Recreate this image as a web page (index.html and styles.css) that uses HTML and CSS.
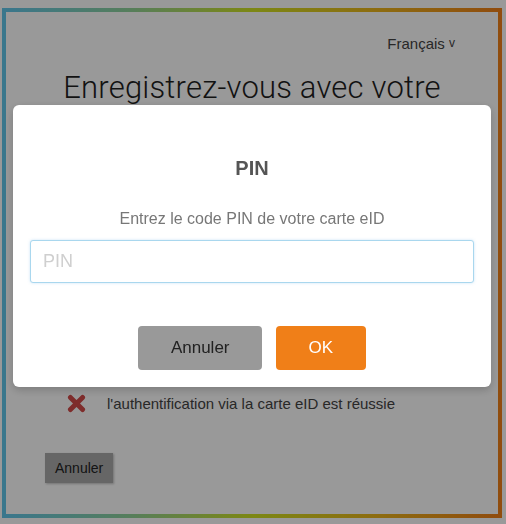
FILE: index.html
```html
<!DOCTYPE html>
<html lang="fr">
<head>
<meta charset="utf-8">
<title>Enregistrez-vous</title>
<link rel="stylesheet" href="styles.css">
</head>
<body>
<div class="page">
  <div class="frame">
    <div class="lang">Français <span class="caret">v</span></div>
    <h1 class="title">Enregistrez-vous avec votre carte eID</h1>
    <ul class="steps">
      <li class="step">
        <svg class="x-icon" viewBox="0 0 20 20" aria-hidden="true"><path d="M3.6 3.6 L16.4 16.4 M16.4 3.6 L3.6 16.4"/></svg>
        <span class="step-text">l'authentification via la carte eID est réussie</span>
      </li>
    </ul>
    <div class="actions"><button class="btn-cancel" type="button">Annuler</button></div>
  </div>
</div>
<div class="overlay">
  <div class="modal">
    <h2 class="modal-title">PIN</h2>
    <p class="modal-text">Entrez le code PIN de votre carte eID</p>
    <input class="pin-input" type="password" placeholder="PIN">
    <div class="modal-actions">
      <button class="btn btn-grey" type="button">Annuler</button>
      <button class="btn btn-orange" type="button">OK</button>
    </div>
  </div>
</div>
</body>
</html>
```

FILE: styles.css
```css
* { box-sizing: border-box; }

html, body {
  margin: 0;
  background: #ffffff;
  font-family: "Liberation Sans", Arial, sans-serif;
}

.page {
  padding: 8px 4px 6px 2px;
}

.frame {
  height: 510px;
  border: 4px solid #5fc3e4;
  border-image: linear-gradient(90deg, #62c6ea 0%, #8fd29a 25%, #cfe223 50%, #ebb51c 75%, #f08018 100%) 1;
  padding: 23px 43px 0 0;
  display: flex;
  flex-direction: column;
}

.lang {
  align-self: flex-end;
  font-size: 15px;
  line-height: 17px;
  color: #444;
}

.caret {
  font-size: 12px;
  vertical-align: 2px;
}

.title {
  margin: 18px 0 0 43px;
  font-family: Roboto, "Liberation Sans", sans-serif;
  font-weight: 300;
  font-size: 31px;
  line-height: 36px;
  letter-spacing: 0.2px;
  color: #1e1e1e;
  text-align: center;
}

.steps {
  list-style: none;
  margin: 251px 0 0;
  padding: 0 0 0 61px;
}

.step {
  display: flex;
  align-items: center;
  height: 20px;
  gap: 21px;
}

.x-icon {
  width: 19px;
  height: 19px;
  fill: none;
  stroke: #d24a48;
  stroke-width: 5.2;
  stroke-linecap: round;
}

.step-text {
  font-size: 15px;
  color: #444;
}

.actions {
  margin: 40px 0 0 39px;
}

.btn-cancel {
  height: 30px;
  padding: 0 10px;
  border: none;
  background: #aaaaaa;
  color: #222;
  font-family: "Liberation Sans", Arial, sans-serif;
  font-size: 14px;
  box-shadow: 1px 1px 2px rgba(0,0,0,0.25);
}

.overlay {
  position: fixed;
  inset: 0;
  background: rgba(0, 0, 0, 0.4);
  padding: 105px 15px 0 13px;
}

.modal {
  background: #ffffff;
  border-radius: 6px;
  padding: 51px 17px 17px;
  box-shadow: 0 3px 9px rgba(0,0,0,0.2);
  display: flex;
  flex-direction: column;
  align-items: stretch;
  text-align: center;
}

.modal-title {
  margin: 0;
  font-size: 20px;
  line-height: 24px;
  font-weight: 700;
  color: #555;
}

.modal-text {
  margin: 29px 0 0;
  font-size: 16px;
  line-height: 20px;
  color: #777;
}

.pin-input {
  margin-top: 11px;
  height: 43px;
  width: 100%;
  border: 1px solid #a9d7ee;
  border-radius: 3px;
  padding: 0 12px;
  font-family: "Liberation Sans", Arial, sans-serif;
  font-size: 18px;
  color: #555;
  box-shadow: 0 0 3px rgba(102, 175, 233, 0.35);
  outline: none;
}

.pin-input::placeholder {
  color: #cfcfcf;
}

.modal-actions {
  margin-top: 43px;
  display: flex;
  justify-content: center;
  gap: 14px;
}

.btn {
  height: 44px;
  padding: 0 32.5px;
  border: none;
  border-radius: 4px;
  font-family: "Liberation Sans", Arial, sans-serif;
  font-size: 17px;
}

.btn-grey {
  background: #999999;
  color: #222;
}

.btn-orange {
  background: #f07f18;
  color: #ffffff;
}
```
